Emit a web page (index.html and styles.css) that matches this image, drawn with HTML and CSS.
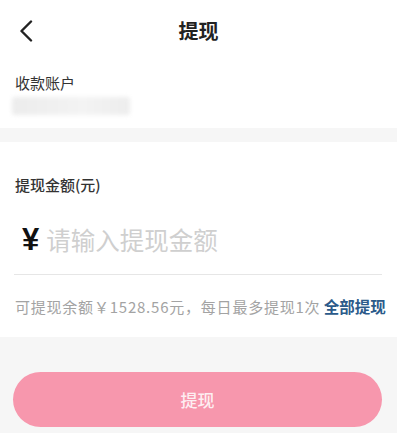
FILE: index.html
```html
<!DOCTYPE html>
<html lang="zh-CN">
<head>
<meta charset="utf-8">
<title>提现</title>
<link rel="stylesheet" href="styles.css">
</head>
<body>
<div class="page">
  <header class="header">
    <div class="back">
      <svg width="14" height="22" viewBox="0 0 14 22"><path d="M12 1.5 L2.5 11 L12 20.5" fill="none" stroke="#222" stroke-width="2.4" stroke-linecap="round" stroke-linejoin="round"/></svg>
    </div>
    <h1 class="title">提现</h1>
    <div></div>
  </header>

  <section class="account">
    <div class="label">收款账户</div>
    <div class="account-value"></div>
  </section>

  <div class="gap"></div>

  <section class="amount">
    <div class="label label-strong">提现金额(元)</div>
    <div class="input-row">
      <span class="yen">¥</span>
      <input class="amount-input" type="text" placeholder="请输入提现金额">
    </div>
    <div class="rule"></div>
    <div class="info"><span class="avail">可提现余额￥1528.56元，每日最多提现1次</span> <span class="all">全部提现</span></div>
  </section>

  <section class="footer">
    <button class="submit">提现</button>
  </section>
</div>
</body>
</html>
```
FILE: styles.css
```css
html, body {
  margin: 0;
  padding: 0;
  background: #ffffff;
}
body {
  font-family: "Noto Sans CJK SC", "Noto Sans", sans-serif;
  color: #333;
}
.page {
  width: 397px;
  height: 433px;
  display: flex;
  flex-direction: column;
  overflow: hidden;
}
.header {
  height: 62px;
  display: grid;
  grid-template-columns: 1fr auto 1fr;
  align-items: center;
}
.back {
  padding-left: 19px;
  display: flex;
  align-items: center;
}
.title {
  margin: 0;
  font-size: 20px;
  font-weight: 700;
  color: #222;
  line-height: 24px;
}
.label {
  font-size: 15px;
  line-height: 20px;
  color: #333;
}
.label-strong {
  font-weight: 500;
}
.account {
  padding: 11px 15px 13px;
}
.account-value {
  margin-top: 4px;
  margin-left: -3px;
  width: 118px;
  height: 18px;
  background: linear-gradient(90deg, #ececec, #f3f3f3 60%, #ededed);
  border-radius: 3px;
  filter: blur(2px);
}
.gap {
  height: 14px;
  background: #f6f6f6;
}
.amount {
  padding: 33px 15px 20px 14px;
}
.amount .label {
  padding-left: 1px;
}
.input-row {
  margin-top: 25px;
  height: 40px;
  display: flex;
  align-items: center;
  gap: 7px;
  padding-left: 8px;
}
.yen {
  font-family: "Liberation Sans", sans-serif;
  font-size: 31px;
  font-weight: 700;
  color: #111;
  line-height: 40px;
}
.amount-input {
  border: none;
  outline: none;
  padding: 0;
  margin: 0;
  flex: 1;
  min-width: 0;
  font-family: "Noto Sans CJK SC", sans-serif;
  font-size: 24.5px;
  line-height: 40px;
  height: 40px;
  background: transparent;
  color: #333;
}
.amount-input::placeholder {
  color: #cfcfcf;
}
.rule {
  margin-top: 14px;
  height: 1px;
  background: #e6e6e6;
}
.info {
  margin-top: 21px;
  padding-left: 1px;
  font-size: 15px;
  line-height: 20px;
  color: #a3a3a3;
  white-space: nowrap;
}
.avail {
  letter-spacing: 0.78px;
}
.all {
  color: #2b5a8a;
  font-weight: 700;
  font-size: 15.5px;
}
.footer {
  flex: 1;
  background: #f6f6f6;
  padding: 35px 15px 0 13px;
}
.submit {
  width: 100%;
  height: 55px;
  border: none;
  border-radius: 28px;
  background: #f797ad;
  color: rgba(255, 255, 255, 0.85);
  font-family: "Noto Sans CJK SC", sans-serif;
  font-size: 17px;
  font-weight: 500;
}
```
